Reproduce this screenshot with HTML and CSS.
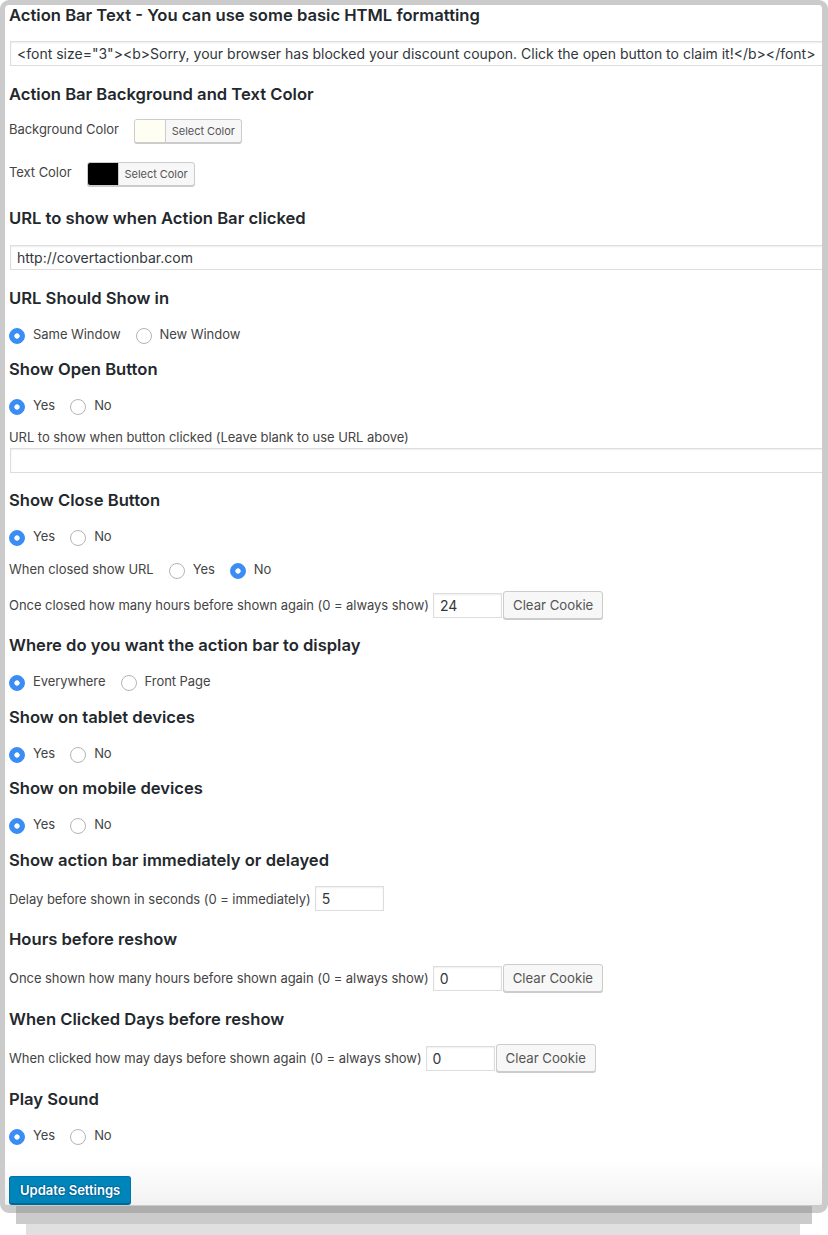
FILE: index.html
```html
<!DOCTYPE html>
<html>
<head>
<meta charset="utf-8">
<title>Action Bar Settings</title>
<link rel="stylesheet" href="styles.css">
</head>
<body>
<div class="frame">
  <div class="content">
    <form class="settings">
      <h3 class="title mt-n2">Action Bar Text - You can use some basic HTML formatting</h3>
      <input class="field wide mt-14" type="text" value='&lt;font size="3"&gt;&lt;b&gt;Sorry, your browser has blocked your discount coupon. Click the open button to claim it!&lt;/b&gt;&lt;/font&gt;'>

      <h3 class="title mt-16">Action Bar Background and Text Color</h3>
      <div class="color-row mt-13">
        <span class="row-label">Background Color</span>
        <span class="color-btn"><span class="swatch swatch-cream"></span><span class="color-text">Select Color</span></span>
      </div>
      <div class="color-row mt-19">
        <span class="row-label">Text Color</span>
        <span class="color-btn"><span class="swatch swatch-black"></span><span class="color-text">Select Color</span></span>
      </div>

      <h3 class="title mt-20">URL to show when Action Bar clicked</h3>
      <input class="field wide mt-15" type="text" value="http://covertactionbar.com">

      <h3 class="title mt-16">URL Should Show in</h3>
      <div class="radio-row mt-12">
        <label class="opt"><input type="radio" name="win" checked><span>Same Window</span></label>
        <label class="opt"><input type="radio" name="win"><span>New Window</span></label>
      </div>

      <h3 class="title mt-11">Show Open Button</h3>
      <div class="radio-row mt-12">
        <label class="opt"><input type="radio" name="open" checked><span>Yes</span></label>
        <label class="opt"><input type="radio" name="open"><span>No</span></label>
      </div>
      <p class="hint mt-12">URL to show when button clicked (Leave blank to use URL above)</p>
      <input class="field wide mt-3" type="text" value="">

      <h3 class="title mt-15">Show Close Button</h3>
      <div class="radio-row mt-12">
        <label class="opt"><input type="radio" name="close" checked><span>Yes</span></label>
        <label class="opt"><input type="radio" name="close"><span>No</span></label>
      </div>
      <div class="radio-row mt-9">
        <span class="row-label">When closed show URL</span>
        <label class="opt"><input type="radio" name="closedurl"><span>Yes</span></label>
        <label class="opt"><input type="radio" name="closedurl" checked><span>No</span></label>
      </div>
      <div class="inline-row mt-10">
        <span class="row-label">Once closed how many hours before shown again (0 = always show)</span>
        <input class="field small" type="text" value="24">
        <button class="btn" type="button">Clear Cookie</button>
      </div>

      <h3 class="title mt-14">Where do you want the action bar to display</h3>
      <div class="radio-row mt-12">
        <label class="opt"><input type="radio" name="where" checked><span>Everywhere</span></label>
        <label class="opt"><input type="radio" name="where"><span>Front Page</span></label>
      </div>

      <h3 class="title mt-12">Show on tablet devices</h3>
      <div class="radio-row mt-12">
        <label class="opt"><input type="radio" name="tablet" checked><span>Yes</span></label>
        <label class="opt"><input type="radio" name="tablet"><span>No</span></label>
      </div>

      <h3 class="title mt-11">Show on mobile devices</h3>
      <div class="radio-row mt-12">
        <label class="opt"><input type="radio" name="mobile" checked><span>Yes</span></label>
        <label class="opt"><input type="radio" name="mobile"><span>No</span></label>
      </div>

      <h3 class="title mt-12">Show action bar immediately or delayed</h3>
      <div class="inline-row short mt-14">
        <span class="row-label">Delay before shown in seconds (0 = immediately)</span>
        <input class="field small" type="text" value="5">
      </div>

      <h3 class="title mt-16">Hours before reshow</h3>
      <div class="inline-row mt-13">
        <span class="row-label">Once shown how many hours before shown again (0 = always show)</span>
        <input class="field small" type="text" value="0">
        <button class="btn" type="button">Clear Cookie</button>
      </div>

      <h3 class="title mt-15">When Clicked Days before reshow</h3>
      <div class="inline-row mt-13">
        <span class="row-label">When clicked how may days before shown again (0 = always show)</span>
        <input class="field small" type="text" value="0">
        <button class="btn" type="button">Clear Cookie</button>
      </div>

      <h3 class="title mt-15">Play Sound</h3>
      <div class="radio-row mt-12">
        <label class="opt"><input type="radio" name="sound" checked><span>Yes</span></label>
        <label class="opt"><input type="radio" name="sound"><span>No</span></label>
      </div>

      <div class="submit-row">
        <button class="btn-primary" type="button">Update Settings</button>
      </div>
    </form>
  </div>
</div>
<div class="band band-mid"></div>
<div class="band band-low"></div>
</body>
</html>
```

FILE: styles.css
```css
html, body {
  margin: 0;
  padding: 0;
  background: #fff;
}

body {
  font-family: Inter, "Liberation Sans", Arial, sans-serif;
  font-size: 13px;
  letter-spacing: -0.05px;
  color: #444;
}

.frame {
  position: relative;
  box-sizing: border-box;
  width: 828px;
  height: 1213px;
  border: 5px solid #cbcbcb;
  border-right-width: 6px;
  border-bottom-width: 8px;
  border-radius: 9px;
  background: linear-gradient(to bottom, #fff calc(100% - 44px), #f2f2f2 100%);
}

.frame::after {
  content: "";
  position: absolute;
  left: 11px;
  right: 10px;
  bottom: -8px;
  height: 7px;
  background: #adadad;
}

.content {
  height: 100%;
  overflow: hidden;
  border-radius: 4px 4px 3px 3px;
}

.settings {
  display: flex;
  flex-direction: column;
  align-items: flex-start;
  padding-left: 4px;
  margin: 0;
}

.band {
  height: 11px;
}

.band-mid {
  margin: 0 16px;
  background: #cbcbcb;
}

.band-low {
  margin: 0 28px 0 26px;
  background: #e0e0e0;
}

.title {
  margin: 0;
  height: 24px;
  line-height: 24px;
  font-size: 16.6px;
  font-weight: 600;
  letter-spacing: 0;
  color: #23282d;
  white-space: nowrap;
}

.field {
  box-sizing: border-box;
  height: 25px;
  margin: 0 0 0 1px;
  padding: 0 6px;
  border: 1px solid #ddd;
  box-shadow: inset 0 1px 2px rgba(0, 0, 0, 0.07);
  background: #fff;
  font-family: Inter, "Liberation Sans", Arial, sans-serif;
  font-size: 14px;
  color: #32373c;
  outline: none;
}

.field.wide {
  width: 900px;
}

.field.small {
  width: 69px;
  margin-left: 4px;
}

.hint {
  margin: 0;
  line-height: 16px;
  height: 16px;
}

.row-label {
  white-space: nowrap;
}

.color-row {
  display: flex;
  align-items: center;
  height: 24px;
  gap: 15px;
}

.color-row .row-label {
  margin-bottom: 4px;
}

.color-btn {
  display: flex;
  box-sizing: border-box;
  height: 24px;
  border: 1px solid #ccc;
  border-radius: 3px;
  box-shadow: 0 1px 0 #ccc;
  overflow: hidden;
  background: #f7f7f7;
}

.swatch {
  width: 30px;
  border-right: 1px solid #ccc;
}

.swatch-cream {
  background: #fefef2;
}

.swatch-black {
  background: #000;
}

.color-text {
  padding: 0 6px;
  line-height: 22px;
  font-size: 11px;
  color: #555;
  white-space: nowrap;
}

.radio-row {
  display: flex;
  align-items: center;
  height: 24px;
  gap: 15px;
}

.opt {
  display: flex;
  align-items: center;
  gap: 8px;
}

.opt input {
  appearance: none;
  -webkit-appearance: none;
  box-sizing: border-box;
  width: 16px;
  height: 16px;
  margin: 3px 0 0 0;
  border: 1px solid #b4b4b4;
  border-radius: 50%;
  background: #fff;
}

.opt input:checked {
  border-color: #3a8df5;
  background: radial-gradient(circle, #fff 0, #fff 2.3px, #3a8df5 3px);
}

.inline-row {
  display: flex;
  align-items: center;
  height: 28px;
}

.inline-row.short {
  height: 25px;
}

.btn {
  box-sizing: border-box;
  height: 28px;
  margin-left: 1px;
  padding: 0 9px;
  border: 1px solid #ccc;
  border-radius: 3px;
  background: #f7f7f7;
  box-shadow: 0 1px 0 #ccc;
  font-family: Inter, "Liberation Sans", Arial, sans-serif;
  font-size: 13.2px;
  color: #555;
  white-space: nowrap;
}

.submit-row {
  margin-top: 29px;
}

.btn-primary {
  box-sizing: border-box;
  height: 28px;
  padding: 0 10px;
  border: 1px solid #0073aa;
  border-bottom-color: #006799;
  border-radius: 3px;
  background: #0085ba;
  box-shadow: 0 1px 0 #006799;
  text-shadow: 0 -1px 1px #006799, 1px 0 1px #006799, 0 1px 1px #006799, -1px 0 1px #006799;
  font-family: Inter, "Liberation Sans", Arial, sans-serif;
  font-size: 13px;
  font-weight: 600;
  color: #fff;
  white-space: nowrap;
}

.mt-n2 { margin-top: -2px; }
.mt-3 { margin-top: 3px; }
.mt-9 { margin-top: 9px; }
.mt-10 { margin-top: 10px; }
.mt-11 { margin-top: 11px; }
.mt-12 { margin-top: 12px; }
.mt-13 { margin-top: 13px; }
.mt-14 { margin-top: 14px; }
.mt-15 { margin-top: 15px; }
.mt-16 { margin-top: 16px; }
.mt-19 { margin-top: 19px; }
.mt-20 { margin-top: 20px; }
```
